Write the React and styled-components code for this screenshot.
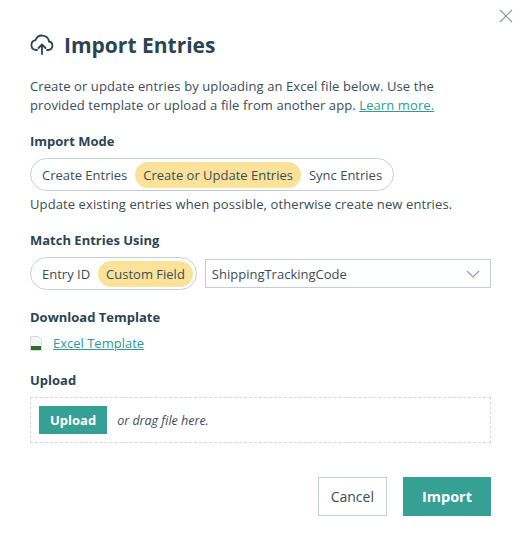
import React from 'react';
import styled, { createGlobalStyle } from 'styled-components';

const Global = createGlobalStyle`
  body { margin: 0; background: #fff; font-family: "Open Sans", "Noto Sans", sans-serif; color: #2f4450; }
`;

const Dialog = styled.div`
  position: relative;
  width: 521px;
  height: 541px;
  box-sizing: border-box;
  padding: 31px 30px 0 30px;
`;

const Close = styled.button`
  position: absolute;
  top: 8px;
  right: 6px;
  width: 18px;
  height: 18px;
  border: 0;
  background: none;
  padding: 0;
  color: #8a9aa2;
`;

const Title = styled.h1`
  display: flex;
  align-items: center;
  gap: 10px;
  margin: 0 0 18px;
  font-size: 21px;
  font-weight: 700;
  color: #2b4452;
`;

const Text = styled.p`
  margin: 0;
  font-size: 13px;
  line-height: 19px;
  color: #3a4d57;
  letter-spacing: 0.1px;
`;

const Link = styled.a`
  color: #2e9a8d;
  text-decoration: underline;
`;

const Label = styled.div`
  font-size: 13px;
  font-weight: 700;
  color: #2b4452;
  margin: ${p => p.$top}px 0 8px;
`;

const Row = styled.div`
  display: flex;
  gap: 8px;
  align-items: center;
`;

const Pill = styled.div`
  display: inline-flex;
  align-items: center;
  height: 33px;
  box-sizing: border-box;
  padding: 0 3px;
  border: 1px solid #c4ced2;
  border-radius: 17px;
`;

const Option = styled.span`
  font-size: 13px;
  padding: 4px 8px;
  border-radius: 13px;
  background: ${p => (p.$on ? '#fbe29a' : 'transparent')};
  color: #3a4d57;
`;

const Select = styled.div`
  flex: 1;
  height: 29px;
  box-sizing: border-box;
  border: 1px solid #c4ced2;
  display: flex;
  align-items: center;
  justify-content: space-between;
  padding: 0 10px 0 6px;
  font-size: 13px;
  color: #3a4d57;
`;

const FileLink = styled.div`
  display: flex;
  align-items: center;
  gap: 11px;
  font-size: 13px;
`;

const Drop = styled.div`
  height: 46px;
  box-sizing: border-box;
  border: 1px dashed #d2d8db;
  display: flex;
  align-items: center;
  gap: 10px;
  padding: 0 8px;
  font-size: 12.5px;
  font-style: italic;
  color: #3a4d57;
`;

const Btn = styled.button`
  height: 39px;
  box-sizing: border-box;
  padding: 0 ${p => p.$px}px;
  font-family: inherit;
  font-size: ${p => (p.$primary ? 14.5 : 14)}px;
  font-weight: ${p => (p.$primary ? 700 : 400)};
  background: ${p => (p.$primary ? '#36a095' : '#fff')};
  color: ${p => (p.$primary ? '#fff' : '#3a4d57')};
  border: ${p => (p.$primary ? '0' : '1px solid #c4ced2')};
`;

const SmallBtn = styled(Btn)`
  height: 28px;
  font-size: 13px;
  font-style: normal;
`;

const Footer = styled.div`
  display: flex;
  justify-content: flex-end;
  gap: 16px;
  margin-top: 34px;
`;

export default function App() {
  return (
    <Dialog>
      <Global />
      <Close aria-label="close">
        <svg width="14" height="14" viewBox="0 0 14 14"><path d="M1 1l12 12M13 1L1 13" stroke="currentColor" strokeWidth="1.2" /></svg>
      </Close>
      <Title>
        <svg width="24" height="22" viewBox="0 0 24 22" fill="none" stroke="#2b4452" strokeWidth="1.8" strokeLinecap="round" strokeLinejoin="round">
          <path d="M7 16H6a5 5 0 0 1-.5-9.9A7 7 0 0 1 19 7.5a4.3 4.3 0 0 1-1 8.5h-1" />
          <path d="M12 20v-9M8.5 14l3.5-3.5 3.5 3.5" />
        </svg>
        Import Entries
      </Title>
      <Text>
        Create or update entries by uploading an Excel file below. Use the<br />provided template or upload a file from another app. <Link>Learn more.</Link>
      </Text>
      <Label $top={17}>Import Mode</Label>
      <Pill>
        <Option>Create Entries</Option>
        <Option $on>Create or Update Entries</Option>
        <Option>Sync Entries</Option>
      </Pill>
      <Text style={{ marginTop: 4 }}>Update existing entries when possible, otherwise create new entries.</Text>
      <Label $top={17}>Match Entries Using</Label>
      <Row>
        <Pill>
          <Option>Entry ID</Option>
          <Option $on>Custom Field</Option>
        </Pill>
        <Select>
          ShippingTrackingCode
          <svg width="14" height="8" viewBox="0 0 14 8"><path d="M1 1l6 6 6-6" fill="none" stroke="#8a9aa2" strokeWidth="1.1" /></svg>
        </Select>
      </Row>
      <Label $top={18}>Download Template</Label>
      <FileLink>
        <svg width="12" height="15" viewBox="0 0 12 15">
          <path d="M.5.5h8l3 3v11H.5z" fill="#f3f5f6" stroke="#d5dadd" />
          <rect x="1" y="10" width="10" height="4" fill="#2b6e2f" />
        </svg>
        <Link>Excel Template</Link>
      </FileLink>
      <Label $top={19}>Upload</Label>
      <Drop>
        <SmallBtn $primary $px={11}>Upload</SmallBtn>
        or drag file here.
      </Drop>
      <Footer>
        <Btn $px={12}>Cancel</Btn>
        <Btn $primary $px={19}>Import</Btn>
      </Footer>
    </Dialog>
  );
}
